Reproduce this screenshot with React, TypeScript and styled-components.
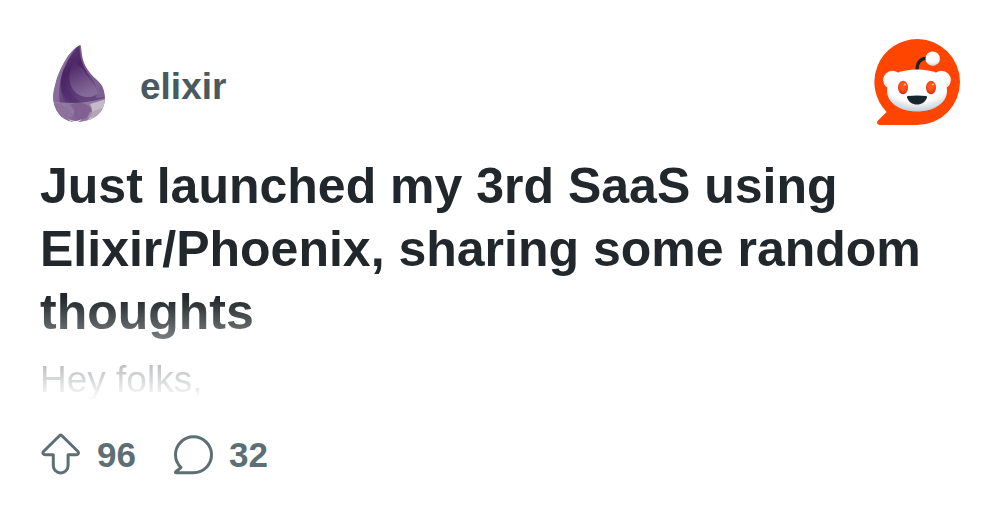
import React from "react";
import styled, { createGlobalStyle } from "styled-components";

const GlobalStyle = createGlobalStyle`
  *, *::before, *::after { box-sizing: border-box; }
  body {
    margin: 0;
    background: #ffffff;
    font-family: "Liberation Sans", Arial, Helvetica, sans-serif;
  }
`;

const Card = styled.article`
  display: flex;
  flex-direction: column;
  padding: 39px 40px;
`;

const Header = styled.header`
  display: flex;
  align-items: center;
  justify-content: space-between;
`;

const Community = styled.a`
  display: flex;
  align-items: center;
  gap: 20px;
  color: #4a5960;
  text-decoration: none;
`;

const CommunityName = styled.span`
  padding-top: 10px;
  font-size: 37px;
  line-height: 44px;
  font-weight: 700;
`;

const Avatar = styled.svg`
  display: block;
  width: 80px;
  height: 86px;
`;

const BrandLogo = styled.svg`
  display: block;
  width: 86px;
  height: 86px;
`;

const Preview = styled.div`
  height: 246px;
  margin-top: 30px;
  overflow: hidden;
  mask-image: linear-gradient(to bottom, #000 58%, transparent 100%);
`;

const Title = styled.h1`
  margin: 0;
  color: #21272a;
  font-size: 50px;
  line-height: 63px;
  font-weight: 700;
`;

const Excerpt = styled.p`
  margin: 12px 0 0;
  color: #42484d;
  font-size: 37px;
  line-height: 48px;
`;

const Stats = styled.footer`
  display: flex;
  align-items: center;
  gap: 36px;
  margin-top: 32px;
`;

const Stat = styled.button`
  display: flex;
  align-items: center;
  gap: 16px;
  padding: 0;
  border: 0;
  background: none;
  color: #5c6f74;
  font-family: inherit;
  font-size: 35px;
  line-height: 44px;
  font-weight: 700;
`;

const StatIcon = styled.svg`
  display: block;
  width: 41px;
  height: 44px;
  fill: none;
  stroke: currentColor;
  stroke-width: 3;
  stroke-linejoin: round;
  stroke-linecap: round;
`;

function ElixirDrop() {
  const drop =
    "M40.500 5.500C34 9 29 15 26 20C20 30 17 37 15 46C13 53 12.500 58 13.500 63C16 75 24 83 36 83C53 83 65 74 65 59C65 53 63 47 60 44C56 39.500 51 36 48 31C44 25 42 19 41.500 10Z";
  return (
    <Avatar viewBox="0 0 80 86" aria-hidden="true">
      <defs>
        <linearGradient id="dropBase" x1="0" y1="0" x2="1" y2="1">
          <stop offset="0" stopColor="#7a6092" />
          <stop offset=".5" stopColor="#67457f" />
          <stop offset="1" stopColor="#674f7b" />
        </linearGradient>
        <linearGradient id="dropCore" x1="0" y1="0" x2="0.5" y2="1">
          <stop offset="0" stopColor="#614279" />
          <stop offset=".45" stopColor="#4a2364" />
          <stop offset="1" stopColor="#66467f" />
        </linearGradient>
        <linearGradient id="dropGlow" x1="0" y1="0" x2="0.3" y2="1">
          <stop offset="0" stopColor="#8d73a1" stopOpacity="0" />
          <stop offset="1" stopColor="#9a83ab" stopOpacity=".6" />
        </linearGradient>
        <clipPath id="dropShape">
          <path d={drop} />
        </clipPath>
      </defs>
      <g clipPath="url(#dropShape)">
        <path d={drop} fill="url(#dropBase)" />
        <path d="M38 5C26 14 14 33 11 52V64H20C17 49 21 31 32 14Z" fill="#a18ab2" opacity=".5" />
        <path d="M39 6C27 20 19 36 21 51C24 60 31 64 40 65L58 64C58 50 50 42 46 31C42 24 41 15 39 6Z" fill="url(#dropCore)" />
        <path d="M34 22C30 30 27 39 32 49C37 58 50 61 57 55C59 48 48 40 43 30Z" fill="url(#dropGlow)" />
        <path d="M40 4C38 20 44 30 51 38C55 44 58 50 56 59L70 57L60 37L44 20Z" fill="#9c84ad" opacity=".4" />
        <path d="M24 29C23 46 31 58 45 66L34 72C20 62 17 45 24 29Z" fill="#4c2865" opacity=".45" />
        <path d="M10 62C26 65 48 65 68 58V86H10Z" fill="#9c84a9" opacity=".8" />
        <path d="M30 66C41 60 53 67 52 74C47 81 35 84 28 81C35 77 37 71 30 66Z" fill="#765189" opacity=".6" />
        <path d="M50 65L67 60V80L43 84C52 79 54 73 50 65Z" fill="#cec6d1" opacity=".85" />
        <path d="M50 73L63 69L58 78L47 79Z" fill="#a99eac" opacity=".7" />
        <path d="M12 64C24 65 33 72 38 84H20Z" fill="#8a6c9a" opacity=".5" />
        <path d="M28 80Q36 84 42 80Q36 87 28 80Z" fill="#f4f0f5" />
      </g>
    </Avatar>
  );
}

function RedditMark() {
  return (
    <BrandLogo viewBox="0 0 86 86" role="img" aria-label="Reddit">
      <defs>
        <radialGradient id="face" cx=".5" cy=".2" r=".84">
          <stop offset="0" stopColor="#ffffff" />
          <stop offset=".68" stopColor="#fbfdfe" />
          <stop offset="1" stopColor="#b4c6d2" />
        </radialGradient>
        <linearGradient id="ear" x1="0" y1="0" x2="0" y2="1">
          <stop offset=".5" stopColor="#ffffff" />
          <stop offset="1" stopColor="#d5e0e7" />
        </linearGradient>
        <radialGradient id="eye" cx=".5" cy=".4" r=".6">
          <stop offset="0" stopColor="#ff6519" />
          <stop offset=".65" stopColor="#ff4713" />
          <stop offset="1" stopColor="#b52b16" />
        </radialGradient>
      </defs>
      <path d="M43 0A43 43 0 1 1 43 86H6C3.300 86 2 83.500 4 81.500L12.600 73A43 43 0 0 1 43 0Z" fill="#ff4500" />
      <path d="M43 31C43 23 47 19 54 19" fill="none" stroke="#17252c" strokeWidth="3" strokeLinecap="round" />
      <circle cx="58.700" cy="19.700" r="7.200" fill="url(#face)" />
      <circle cx="18.500" cy="41" r="9.300" fill="url(#ear)" />
      <circle cx="67.500" cy="41" r="9.300" fill="url(#ear)" />
      <path d="M43 30.500C51 30.500 58 32 63 34C70 38 73 46 73 52C73 64 60 72.500 43 72.500S13 64 13 52C13 46 16 38 23 34C28 32 35 30.500 43 30.500Z" fill="url(#face)" />
      <ellipse cx="29" cy="48.500" rx="5" ry="6.800" fill="url(#eye)" />
      <ellipse cx="57" cy="48.500" rx="5" ry="6.800" fill="url(#eye)" />
      <circle cx="31" cy="45.500" r="1" fill="#ffc49c" />
      <circle cx="59" cy="45.500" r="1" fill="#ffc49c" />
      <path d="M34 57Q43 56 52 57Q53.500 57 53 58.500C51.500 63 47.500 65.500 43 65.500S34.500 63 33 58.500Q32.500 57 34 57Z" fill="#17252c" />
    </BrandLogo>
  );
}

export default function App() {
  return (
    <>
      <GlobalStyle />
      <Card>
        <Header>
          <Community href="#elixir">
            <ElixirDrop />
            <CommunityName>elixir</CommunityName>
          </Community>
          <RedditMark />
        </Header>
        <Preview>
          <Title>Just launched my 3rd SaaS using Elixir/Phoenix, sharing some random thoughts</Title>
          <Excerpt>Hey folks,</Excerpt>
        </Preview>
        <Stats>
          <Stat type="button" aria-label="96 upvotes">
            <StatIcon viewBox="0 0 41 44" aria-hidden="true">
              <path d="M19.700 2.500Q20.700 1.500 21.700 2.500L37.700 18.300C39.200 20 38.300 21.800 36 21.800H28.100V32.500A7.400 7.400 0 0 1 13.300 32.500V21.800H5.400C3.100 21.800 2.200 20 3.700 18.300Z" />
            </StatIcon>
            96
          </Stat>
          <Stat type="button" aria-label="32 comments">
            <StatIcon viewBox="0 0 41 44" aria-hidden="true">
              <path d="M21.500 3.800A18 18 0 1 1 21.500 39.800H4.400Q2.800 39.800 4 38.500L9 34.600Q3.500 29.100 3.500 21.800A18 18 0 0 1 21.500 3.800Z" />
            </StatIcon>
            32
          </Stat>
        </Stats>
      </Card>
    </>
  );
}
